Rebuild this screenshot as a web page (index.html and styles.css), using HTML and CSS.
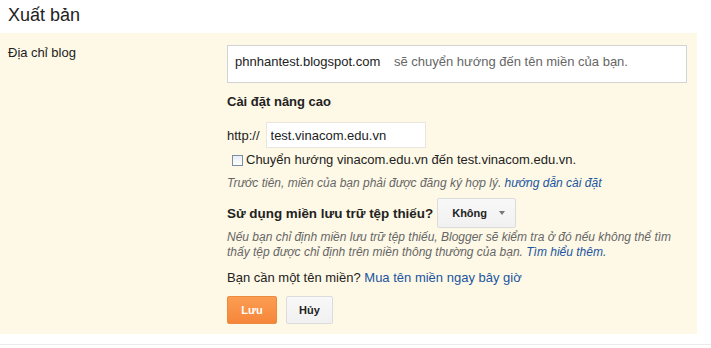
FILE: index.html
```html
<!DOCTYPE html>
<html lang="vi">
<head>
    <meta charset="UTF-8">
    <title>Xuất bản</title>
    <link rel="stylesheet" href="styles.css">
</head>
<body>
    <h1 class="page-title">Xuất bản</h1>

    <div class="panel">
        <div class="field-label">Địa chỉ blog</div>

        <div class="field-body">
            <div class="domain-box">
                <span class="domain-name">phnhantest.blogspot.com</span>
                <span class="domain-note">sẽ chuyển hướng đến tên miền của bạn.</span>
            </div>

            <div class="section-title">Cài đặt nâng cao</div>

            <div class="url-row">
                <span>http://</span>
                <input class="url-input" type="text" value="test.vinacom.edu.vn">
            </div>

            <label class="check-row">
                <span class="check-box"></span>
                Chuyển hướng vinacom.edu.vn đến test.vinacom.edu.vn.
            </label>

            <div class="hint">Trước tiên, miền của bạn phải được đăng ký hợp lý. <a href="#">hướng dẫn cài đặt</a></div>

            <div class="fallback-row">
                <span class="fallback-title">Sử dụng miền lưu trữ tệp thiếu?</span>
                <button type="button" class="menu-btn">Không <span class="caret"></span></button>
            </div>

            <div class="hint hint-para">Nếu bạn chỉ định miền lưu trữ tệp thiếu, Blogger sẽ kiểm tra ở đó nếu không thể tìm thấy tệp được chỉ định trên miền thông thường của bạn. <a href="#">Tìm hiểu thêm.</a></div>

            <div class="buy-row">Bạn cần một tên miền? <a href="#">Mua tên miền ngay bây giờ</a></div>

            <div class="actions">
                <button type="button" class="btn btn-save">Lưu</button>
                <button type="button" class="btn btn-cancel">Hủy</button>
            </div>
        </div>
    </div>

    <div class="divider"></div>
</body>
</html>
```

FILE: styles.css
```css
body {
    margin: 0;
    font-family: "Liberation Sans", Arial, sans-serif;
    font-size: 13px;
    color: #222;
    background: #fff;
}

a {
    color: #21559e;
    text-decoration: none;
}

.page-title {
    margin: 0;
    height: 33px;
    box-sizing: border-box;
    padding: 4px 0 0 8px;
    font-size: 18px;
    line-height: 22px;
    font-weight: normal;
    color: #222;
}

.panel {
    width: 697px;
    box-sizing: border-box;
    background: #fef9e6;
    padding: 12px 0 10px 8px;
    display: grid;
    grid-template-columns: 219px 460px;
}

.field-label {
    line-height: 16px;
    color: #222;
}

.domain-box {
    height: 38px;
    box-sizing: border-box;
    border: 1px solid #d3d3d3;
    background: #fff;
    padding: 8px 7px 0;
    line-height: 16px;
}

.domain-note {
    margin-left: 10px;
    color: #666;
}

.section-title {
    margin-top: 11px;
    font-weight: bold;
    line-height: 16px;
    color: #222;
}

.url-row {
    margin-top: 12px;
    display: flex;
    align-items: center;
    gap: 6px;
}

.url-input {
    width: 160px;
    height: 26px;
    box-sizing: border-box;
    border: 1px solid #e8e6df;
    background: #fff;
    padding: 0 4px;
    font-family: inherit;
    font-size: 13px;
    color: #222;
    outline: none;
}

.check-row {
    margin-top: 4px;
    display: flex;
    align-items: center;
    line-height: 16px;
}

.check-box {
    width: 11px;
    height: 11px;
    box-sizing: border-box;
    margin: 1px 3px 0 5px;
    border: 1px solid #7d8c9e;
    background: linear-gradient(#e9eef3, #fff);
}

.hint {
    margin-top: 7px;
    font-size: 12px;
    font-style: italic;
    line-height: 16px;
    color: #666;
}

.fallback-row {
    margin-top: 7px;
    display: flex;
    align-items: center;
    gap: 4px;
}

.fallback-title {
    font-size: 13.4px;
    font-weight: bold;
    color: #222;
}

.menu-btn {
    width: 79px;
    height: 30px;
    border: 1px solid #dcdcdc;
    border-radius: 2px;
    background: linear-gradient(#f8f8f8, #f1f1f1);
    font-family: inherit;
    font-size: 11px;
    font-weight: bold;
    color: #222;
    padding: 0 0 0 4px;
}

.caret {
    display: inline-block;
    margin-left: 9px;
    vertical-align: 2px;
    border-left: 3px solid transparent;
    border-right: 3px solid transparent;
    border-top: 4px solid #777;
}

.hint-para {
    margin-top: 2px;
    line-height: 15px;
}

.buy-row {
    margin-top: 10px;
    line-height: 16px;
}

.actions {
    margin-top: 10px;
    display: flex;
    gap: 9px;
}

.btn {
    height: 28px;
    border-radius: 2px;
    font-family: inherit;
    font-size: 11px;
    font-weight: bold;
    padding: 0;
}

.btn-save {
    width: 50px;
    border: 1px solid #ec8a3e;
    background: linear-gradient(#fb9d52, #f6863a);
    color: #fff;
}

.btn-cancel {
    width: 47px;
    border: 1px solid #dcdcdc;
    background: linear-gradient(#f8f8f8, #f1f1f1);
    color: #222;
}

.divider {
    margin-top: 10px;
    height: 1px;
    background: #ebebeb;
}
```
